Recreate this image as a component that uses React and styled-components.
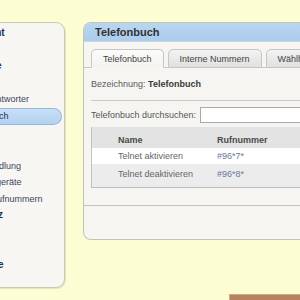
import React from 'react'
import styled, { createGlobalStyle } from 'styled-components'

const GlobalStyle = createGlobalStyle`
  html, body {
    margin: 0;
    padding: 0;
    background: #fdfdd4;
    overflow: hidden;
  }
  body {
    font-family: "Liberation Sans", Arial, sans-serif;
    font-size: 9px;
    color: #555;
  }
`

const Page = styled.div`
  display: flex;
  flex-direction: column;
  width: 300px;
  height: 300px;
  padding-top: 22px;
  box-sizing: border-box;
  overflow: hidden;
`

const Main = styled.div`
  display: flex;
  align-items: flex-start;
  gap: 18px;
`

const Sidebar = styled.nav`
  flex: none;
  width: 117px;
  height: 266px;
  margin-left: -52px;
  box-sizing: border-box;
  padding-top: 2px;
  background: #f8f6f2;
  border: 1px solid #c9cbb0;
  border-radius: 9px;
  box-shadow: 1px 1px 0 #e4e5c8;
`

const NavItem = styled.div`
  height: 16.5px;
  line-height: 16.5px;
  margin-right: 4px;
  padding-left: ${p => (p.top ? '9.5px' : '11px')};
  font-size: ${p => (p.top ? '10px' : '9px')};
  font-weight: ${p => (p.top ? 'bold' : 'normal')};
  color: ${p => (p.top || p.active ? '#1f2f55' : '#3d4560')};
  white-space: nowrap;
  box-sizing: border-box;
  ${p => p.active && `
    background: linear-gradient(#c8e0f7, #b3d1f0);
    border: 1px solid #93b8de;
    border-left: none;
    border-radius: 0 9px 9px 0;
    line-height: 14.5px;
    height: 17px;
    margin-right: 2px;
  `}
`

const Panel = styled.section`
  flex: none;
  width: 260px;
  height: 216px;
  background: #f7f5f2;
  border: 1px solid #c3c5b4;
  border-right: none;
  border-radius: 8px 0 0 8px;
  overflow: hidden;
  display: flex;
  flex-direction: column;
`

const PanelHeader = styled.div`
  height: 18px;
  line-height: 18px;
  padding-left: 11px;
  background: linear-gradient(#b9d5f0, #acccec);
  border-bottom: 1px solid #c7d7e6;
  font-size: 11px;
  font-weight: bold;
  color: #303030;
`

const TabRow = styled.div`
  display: flex;
  gap: 4px;
  padding: 7px 0 0 7px;
  position: relative;
  z-index: 1;
`

const Tab = styled.div`
  height: 19px;
  line-height: 19px;
  padding: 0 11px;
  box-sizing: border-box;
  border: 1px solid #c6c6c2;
  border-bottom: ${p => (p.active ? '1px solid #f7f5f2' : '1px solid #c6c6c2')};
  border-radius: 5px 5px 0 0;
  background: ${p => (p.active
    ? 'linear-gradient(#fbfbfa, #f4f3f0)'
    : 'linear-gradient(#f3f3f3, #e0e0e0)')};
  color: #444;
  white-space: nowrap;
`

const TabContent = styled.div`
  height: 139px;
  margin-top: -1px;
  border-top: 1px solid #c6c6c2;
  border-bottom: 1px solid #c4c4bc;
  padding: 0 0 0 7px;
  box-sizing: border-box;
`

const InfoLine = styled.div`
  height: 32px;
  line-height: 33px;
  border-bottom: 1px solid #c9c9c9;
  color: #5a5a5a;
  b { color: #3a3a3a; }
`

const SearchRow = styled.div`
  display: flex;
  align-items: center;
  gap: 4px;
  height: 25px;
  padding-top: 1px;
  white-space: nowrap;
`

const SearchInput = styled.input`
  flex: 1;
  min-width: 0;
  height: 16px;
  box-sizing: border-box;
  border: 1px solid #a9a9a9;
  background: #fff;
  margin: 0;
`

const Table = styled.div`
  border-left: 1px solid #c2c2c2;
  border-bottom: 1px solid #bdbdbd;
`

const Row = styled.div`
  display: grid;
  grid-template-columns: 99px 1fr;
  height: ${p => p.h}px;
  box-sizing: border-box;
  align-items: center;
  padding: ${p => p.pad || '0'} 0 0 26px;
  padding-bottom: ${p => p.padBottom || '0'};
  background: ${p => p.bg};
  color: ${p => (p.head ? '#4a4a4a' : '#666')};
  font-weight: ${p => (p.head ? 'bold' : 'normal')};
  white-space: nowrap;
`

const Number = styled.span`
  color: ${p => (p.head ? '#4a4a4a' : '#6a7897')};
`

const PanelFooter = styled.div`
  flex: 1;
`

const FooterBar = styled.div`
  margin: 6px 0 0 229px;
  height: 10px;
  background: #b6845c;
  border-top: 1px solid #cfa888;
  border-left: 1px solid #cfa888;
`

const navItems = [
  { label: 'Übersicht', top: true },
  { label: 'Internet', top: true },
  { label: 'Telefonie', top: true },
  { label: 'Anrufe' },
  { label: 'Anrufbeantworter' },
  { label: 'Telefonbuch', active: true },
  { label: 'Weckruf' },
  { label: 'Fax' },
  { label: 'Rufbehandlung' },
  { label: 'Telefoniegeräte' },
  { label: 'Eigene Rufnummern' },
  { label: 'Heimnetz', top: true },
  { label: 'WLAN', top: true },
  { label: 'DECT', top: true },
  { label: 'Diagnose', top: true },
]

const entries = [
  { name: 'Telnet aktivieren', number: '#96*7*', bg: '#ffffff', h: 16 },
  { name: 'Telnet deaktivieren', number: '#96*8*', bg: '#ececec', h: 23, padBottom: '3px' },
]

export default function App() {
  return (
    <Page>
      <GlobalStyle />
      <Main>
        <Sidebar>
          {navItems.map(item => (
            <NavItem key={item.label} top={item.top} active={item.active}>
              {item.label}
            </NavItem>
          ))}
        </Sidebar>
        <Panel>
          <PanelHeader>Telefonbuch</PanelHeader>
          <TabRow>
            <Tab active>Telefonbuch</Tab>
            <Tab>Interne Nummern</Tab>
            <Tab>Wählhilfe</Tab>
          </TabRow>
          <TabContent>
            <InfoLine>Bezeichnung: <b>Telefonbuch</b></InfoLine>
            <SearchRow>
              Telefonbuch durchsuchen:
              <SearchInput type="text" />
            </SearchRow>
            <Table>
              <Row head h={21} pad="4px" bg="#e3e3e3">
                <span>Name</span>
                <Number head>Rufnummer</Number>
              </Row>
              {entries.map(e => (
                <Row key={e.name} h={e.h} bg={e.bg} padBottom={e.padBottom}>
                  <span>{e.name}</span>
                  <Number>{e.number}</Number>
                </Row>
              ))}
            </Table>
          </TabContent>
          <PanelFooter />
        </Panel>
      </Main>
      <FooterBar />
    </Page>
  )
}
